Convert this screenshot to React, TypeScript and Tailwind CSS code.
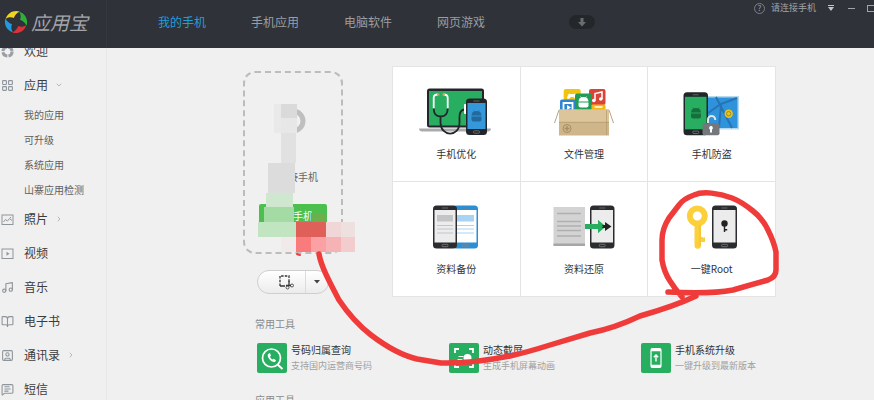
import { ReactNode } from "react"
import { BookOpen, ChevronDown, ChevronRight, Image, LayoutGrid, MessageSquareText, Music, SquarePlay, SquareUser } from "lucide-react"

interface MenuItem {
  name: string
  icon: ReactNode
  arrow?: "down" | "right"
  children?: string[]
}

interface Tile {
  name: string
  drawing: ReactNode
}

interface Tool {
  name: string
  info: string
  drawing: ReactNode
}

const iconProps = { size: 13, strokeWidth: 2, color: "#8f959c" }

const menu: MenuItem[] = [
  { name: "欢迎", icon: <WelcomeIcon /> },
  { name: "应用", icon: <LayoutGrid {...iconProps} />, arrow: "down", children: ["我的应用", "可升级", "系统应用", "山寨应用检测"] },
  { name: "照片", icon: <PhotoIcon />, arrow: "right" },
  { name: "视频", icon: <VideoIcon /> },
  { name: "音乐", icon: <Music {...iconProps} /> },
  { name: "电子书", icon: <BookOpen {...iconProps} /> },
  { name: "通讯录", icon: <SquareUser {...iconProps} />, arrow: "right" },
  { name: "短信", icon: <MessageSquareText {...iconProps} /> },
]

function WelcomeIcon() {
  return (
    <svg width="13" height="13" viewBox="0 0 13 13" fill="none">
      <circle cx="6.5" cy="6.5" r="4.6" stroke="#9a9fa5" strokeWidth="3" strokeDasharray="6 1.2" />
    </svg>
  )
}

function PhotoIcon() {
  return (
    <svg width="13" height="13" viewBox="0 0 13 13" fill="none" stroke="#8f959c">
      <rect x="1" y="2" width="11" height="9.5" />
      <path d="M2.500 9l2-2.500 2 1.500 2-2.500 2.500 2M9 4.500h1" />
    </svg>
  )
}

function VideoIcon() {
  return (
    <svg width="13" height="13" viewBox="0 0 13 13" fill="none" stroke="#8f959c">
      <rect x="1" y="2" width="11" height="9.5" />
      <path d="M5.500 4.800l3 2-3 2z" fill="#8f959c" stroke="none" />
    </svg>
  )
}

const petals = [
  { color: "#f0d41d", turn: 0 },
  { color: "#2fae3c", turn: 90 },
  { color: "#dd3038", turn: 180 },
  { color: "#2599dd", turn: 270 },
]

const Logo = () => (
  <svg width="24" height="24" viewBox="0 0 24 24">
    {petals.map(({ color, turn }) => (
      <path key={color} transform={`rotate(${turn} 12 12)`} d="M2 8C4 2.500 10-.5 15.800 1.500C12.500 3 11 5 9.800 8C7.500 7 4.500 7 2 8.800z" fill={color} />
    ))}
  </svg>
)

const Robot = ({ x, y, color }: { x: number, y: number, color: string }) => (
  <g transform={`translate(${x} ${y})`} fill={color} stroke={color}>
    <path d="M0 5a5 4.500 0 0 1 10 0z" stroke="none" />
    <path d="M0 6h10v3a2 2 0 0 1-2 2H2a2 2 0 0 1-2-2z" stroke="none" />
    <path d="M2 0l1.200 1.600M8 0L6.800 1.600" strokeWidth=".8" />
  </g>
)

const Phone = ({ x, y, w, h, body, screen }: { x: number, y: number, w: number, h: number, body: string, screen: string }) => (
  <g>
    <rect x={x} y={y} width={w} height={h} rx="3.500" fill={body} />
    <rect x={x + 1.5} y={y + 4.5} width={w - 3} height={h - 10.5} fill={screen} />
    <path d={`M${x + w / 2 - 3} ${y + 2.5}h6`} stroke="#777" strokeWidth=".8" />
    <rect x={x + w / 2 - 3} y={y + h - 4.2} width="6" height="2.400" rx="1" fill="none" stroke="#888" strokeWidth=".7" />
  </g>
)

const tiles: Tile[] = [
  {
    name: "手机优化",
    drawing: (
      <>
        <path d="M3 40.500h72c0 2-1.500 3-3 3H6c-1.500 0-3-1-3-3z" fill="#a9abad" />
        <rect x="11" y=".5" width="57" height="39" rx="2.500" fill="#22262a" />
        <rect x="13" y="3" width="53" height="34.500" fill="#27ae60" />
        <path d="M22 6.500c-3 0-4.300 1-4.300 3v11M27.500 6.500c3 0 4.200 1 4.200 3v11" fill="none" stroke="#fff" strokeWidth="1.800" />
        <path d="M21 6.500h2.500M26.500 6.500h2.500" stroke="#cda36a" strokeWidth="1.800" />
        <path d="M17.700 20.500c0 5 2.500 8 7 8s7-3 7-8M24.500 28.500v6c0 14.500 19 15 19 0v-6c0-4 1.500-6.500 5-7" fill="none" stroke="#22262a" strokeWidth="1.800" />
        <rect x="48" y="16" width="4" height="10" rx="1" fill="#fff" />
        <Phone x={50} y={10.5} w={21} h={36.5} body="#22262a" screen="#3498db" />
        <Robot x={55.5} y={22.5} color="#23699c" />
      </>
    ),
  },
  {
    name: "文件管理",
    drawing: (
      <>
        <rect x="19.700" y="1" width="17" height="17" rx="2" fill="#f1c40f" />
        <path d="M23 10c1-4 2-5 3-4h4c2-1 3 1 3.500 4-1.500 2-3 0-4-1h-2.500c-1 1-3 3-4 1z" fill="#fff" />
        <rect x="16" y="11.500" width="16" height="12" rx="2" fill="#2e86d1" />
        <path d="M19.500 22v-7h9v7" fill="none" stroke="#fff" strokeWidth="1.800" />
        <path d="M23 17l4 2.500-4 2.500z" fill="#fff" />
        <rect x="45" y="1" width="16.500" height="16" rx="2" fill="#d94438" />
        <rect x="47" y="16.500" width="14.500" height="8" rx="1.500" fill="#f5b70f" />
        <path d="M50.500 19h8" stroke="#fff" strokeWidth="1.500" />
        <path d="M51 12.500V5.500l7-1.500v7" fill="none" stroke="#fff" strokeWidth="1.500" />
        <circle cx="49.800" cy="12.500" r="1.800" fill="#fff" />
        <circle cx="56.800" cy="11" r="1.800" fill="#fff" />
        <rect x="31" y="5.500" width="16.500" height="17" rx="2" fill="#1f9d57" />
        <Robot x={34.5} y={8.5} color="#fff" />
        <path d="M15 22l-4.500 13M65 22l4.500 13" stroke="#a88b62" strokeWidth=".8" />
        <rect x="15" y="21.500" width="50" height="26" fill="#cfb58a" />
        <rect x="15" y="21.500" width="50" height="12.500" fill="#dcc49b" />
        <path d="M15 34.300h50M62.500 22v25" stroke="#b39869" strokeWidth=".7" />
        <circle cx="23" cy="40.500" r="4" fill="none" stroke="#a78d63" />
        <path d="M20.500 40.500h5M23 38v5" stroke="#a78d63" strokeWidth="1.400" />
      </>
    ),
  },
  {
    name: "手机防盗",
    drawing: (
      <>
        <rect x="34" y="8" width="33" height="33.500" fill="#b9d9ef" />
        <rect x="34" y="9.500" width="31.500" height="30.500" fill="#2f93db" />
        <path d="M36 25l13-9 16-6M44 9l16 31M49 17l-2 23" fill="none" stroke="#2674b6" strokeWidth="2" />
        <circle cx="56.700" cy="25.700" r="4.200" fill="#e6c51c" />
        <circle cx="56.700" cy="25.700" r="2.200" fill="none" stroke="#a08b28" />
        <Phone x={11.5} y={4.3} w={24.5} h={43} body="#22262a" screen="#27ae60" />
        <Robot x={19} y={19.5} color="#176f3c" />
        <path d="M36 35v-3.500a3.600 3.600 0 0 1 7.200 0V32" fill="none" stroke="#dfe6ea" strokeWidth="2" />
        <rect x="30.500" y="35.300" width="17" height="12" rx="2" fill="#74777b" />
        <path d="M39 38a1.900 1.900 0 0 1 1 3.500v3h-2v-3a1.900 1.900 0 0 1 1-3.500z" fill="#fff" />
      </>
    ),
  },
  {
    name: "资料备份",
    drawing: (
      <>
        <Phone x={37} y={2.5} w={25} h={43} body="#2b8fd6" screen="#fff" />
        <rect x="40" y="12" width="18" height="6.500" fill="#a9d3f2" />
        <path d="M41 22.500h17M41 26h17M41 30h17" stroke="#a9d3f2" />
        <Phone x={17} y={2.5} w={24} h={43} body="#2a2c2f" screen="#ececec" />
        <rect x="21" y="12" width="16" height="6.500" fill="#c3c4c6" />
        <path d="M21 22.500h16M21 26h16M21 30h16" stroke="#c3c4c6" />
      </>
    ),
  },
  {
    name: "资料还原",
    drawing: (
      <>
        <rect x="9.500" y="4" width="31.500" height="39" fill="#d3d3d3" />
        <rect x="9.500" y="40.500" width="31.500" height="2.500" fill="#a6a6a6" />
        <path d="M13 10.500h24M13 18.500h24M13 23h24M13 27.500h24M13 33h24" stroke="#b0b0b0" strokeWidth="1.400" />
        <Phone x={46} y={2.5} w={24.5} h={43} body="#2a2c2f" screen="#ececec" />
        <path d="M41 21h13v-4l8 6.500-8 6.500v-4H41z" fill="#27ae60" />
        <path d="M55 22h6v-3l6.500 4.500-6.500 4.500v-3h-6z" fill="#222" />
        <path d="M41 21h13v-4l5 6.500-5 6.500v-4H41z" fill="#27ae60" />
      </>
    ),
  },
  {
    name: "一键Root",
    drawing: (
      <>
        <circle cx="25.300" cy="13" r="7.500" fill="none" stroke="#fbd03a" strokeWidth="6" />
        <path d="M22.500 22h6.500v12h1.500l1 .8 1.500-.8v5h-4v3.500a3.200 3.200 0 0 1-6.500 0z" fill="#fbd03a" />
        <path d="M28 22v21" stroke="#eec033" />
        <Phone x={40} y={2.5} w={25} h={43} body="#2a2c2f" screen="#ececec" />
        <circle cx="52.500" cy="20.500" r="3.200" fill="#222" />
        <path d="M52.500 22v7M53 26.800h2.200" stroke="#222" strokeWidth="1.400" />
      </>
    ),
  },
]

const tools: Tool[] = [
  {
    name: "号码归属查询",
    info: "支持国内运营商号码",
    drawing: (
      <>
        <circle cx="14.500" cy="15" r="9" strokeWidth="1.700" />
        <path d="M20.500 21.500l5 4.500" strokeWidth="2" />
        <path d="M11 11c-1.500 3 3 8.500 7 8l1-1.800-2.300-1.500-1.200.8c-1.300-.6-2.200-1.700-2.500-2.800l1-1-1-2.600z" fill="#fff" stroke="none" />
      </>
    ),
  },
  {
    name: "动态截屏",
    info: "生成手机屏幕动画",
    drawing: (
      <>
        <path d="M6 10V6h4M20 6h4v4M24 20v4h-4M10 24H6v-4" strokeWidth="1.800" />
        <path d="M9.500 13.500h5M8.500 16.500h5" />
        <circle cx="18.500" cy="15" r="4" fill="#fff" stroke="none" />
      </>
    ),
  },
  {
    name: "手机系统升级",
    info: "一键升级到最新版本",
    drawing: (
      <>
        <rect x="10" y="5.500" width="10" height="19" rx="1.500" strokeWidth="1.200" />
        <path d="M10 7h10M10 23h10" strokeWidth="2.500" />
        <path d="M15 18.500V12M12.800 14.200L15 12l2.200 2.200" strokeWidth="1.400" />
      </>
    ),
  },
]

const Header = () => (
  <header className="relative z-10 flex h-12 shrink-0 bg-[#2f3239]">
    <div className="flex w-[107px] shrink-0 items-center gap-[3px] border-r border-[#35383f] pl-1 pb-1">
      <Logo />
      <span className="text-[19px] leading-6 whitespace-nowrap text-[#a3a5a9] italic">应用宝</span>
    </div>
    <nav className="flex items-center gap-[45px] pb-1 pl-[51px] text-xs whitespace-nowrap text-[#9a9da2]">
      <a href="#phone" className="text-[#1f9fdd]">我的手机</a>
      <a href="#apps">手机应用</a>
      <a href="#pc">电脑软件</a>
      <a href="#games">网页游戏</a>
    </nav>
    <button aria-label="下载" className="mt-[15px] ml-[84px] flex h-[14px] w-[26px] items-center justify-center rounded-full bg-[#24272a]">
      <svg width="8" height="9" viewBox="0 0 8 9"><path d="M2.500 0h3v4H8L4 8.500 0 4h2.500z" fill="#6a6d70" /></svg>
    </button>
    <div className="ml-auto flex h-4 items-center text-[9px] whitespace-nowrap text-[#a0a3a8]">
      <button aria-label="帮助" className="mr-1.5 flex size-[11px] items-center justify-center rounded-full border border-[#7c7f84] text-[8px] leading-none">?</button>
      <span>请连接手机</span>
      <button aria-label="菜单" className="ml-3">
        <svg width="6" height="6" viewBox="0 0 6 6"><path d="M0 0h6v1H0zM0 2h6L3 6z" fill="#c3c5c8" /></svg>
      </button>
      <button aria-label="最小化" className="ml-3.5 h-px w-[7px] bg-[#a0a3a8]"></button>
      <button aria-label="最大化" className="ml-3 h-[7px] w-[7px] border border-r-0 border-[#a0a3a8]"></button>
    </div>
  </header>
)

const Sidebar = () => (
  <aside className="w-[107px] shrink-0 border-r border-[#e8e8e8] bg-[#f0f0f0]">
    <ul className="-mt-3.5 whitespace-nowrap">
      {menu.map(item => (
        <li key={item.name}>
          <a href={`#${item.name}`} className="flex h-[34px] items-center text-xs text-[#3c3c3c]">
            <span className="w-6 pl-px">{item.icon}</span>
            {item.name}
            {item.arrow === "down" && <ChevronDown size={8} color="#9a9a9a" className="ml-[7px]" />}
            {item.arrow === "right" && <ChevronRight size={8} color="#9a9a9a" className="ml-[7px]" />}
          </a>
          {item.children && (
            <ul>
              {item.children.map(child => (
                <li key={child}>
                  <a href={`#${child}`} className="flex h-[25px] items-center pb-px pl-6 text-[10px] text-[#5f5f5f]">{child}</a>
                </li>
              ))}
            </ul>
          )}
        </li>
      ))}
    </ul>
  </aside>
)

const PhonePanel = () => (
  <div className="w-[100px] shrink-0 pt-[5px]">
    <div className="flex h-[183px] flex-col items-center rounded-xl border-2 border-dashed border-[#bcbcbc] pt-[34px]">
      <svg width="28" height="28" viewBox="0 0 28 28"><circle cx="14" cy="14" r="10" fill="none" stroke="#bfbfbf" strokeWidth="5" /></svg>
      <div className="mt-[34px] text-[10px] leading-4 text-[#666]">未连接手机</div>
      <button className="mt-[19px] h-6 w-[68px] rounded-xs bg-[#4cc04f] text-[10px] leading-5 text-white">连接手机</button>
    </div>
    <div className="mx-auto mt-4 flex h-6 w-[72px] rounded-full border border-[#cfcfcf] bg-linear-to-b from-white to-[#ececec]">
      <button aria-label="截屏" className="flex flex-1 items-center justify-center pl-2">
        <svg width="16" height="16" viewBox="0 0 16 16" fill="none" stroke="#333">
          <path d="M2 12V2h9v7" strokeWidth="1.300" strokeDasharray="2.500 1.200" />
          <path d="M2 12h5M8 11.500h5M11 7v5" strokeWidth="1.300" />
          <circle cx="9.500" cy="13.500" r="1.500" strokeWidth=".8" />
          <circle cx="14" cy="11.500" r="1.500" strokeWidth=".8" />
        </svg>
      </button>
      <button aria-label="更多" className="flex w-[23px] items-center justify-center border-l border-[#dcdcdc]">
        <svg width="6" height="4" viewBox="0 0 6 4"><path d="M0 0h6L3 3.500z" fill="#444" /></svg>
      </button>
    </div>
  </div>
)

const TileGrid = () => (
  <div className="grid flex-1 grid-cols-3 gap-px bg-[#e4e4e4] p-px">
    {tiles.map(tile => (
      <button key={tile.name} className="flex h-[114px] flex-col items-center bg-white pt-[21px]">
        <svg width="80" height="48" viewBox="0 0 80 48">{tile.drawing}</svg>
        <span className="mt-2.5 text-[10px] leading-4 text-[#333]">{tile.name}</span>
      </button>
    ))}
  </div>
)

const ToolCard = ({ tool }: { tool: Tool }) => (
  <a href={`#${tool.name}`} className="flex items-center gap-1 whitespace-nowrap">
    <svg width="30" height="30" viewBox="0 0 30 30" fill="none" stroke="#fff" className="rounded-xs bg-[#27ae60]">{tool.drawing}</svg>
    <span>
      <span className="block text-[10px] leading-4 text-[#333]">{tool.name}</span>
      <span className="block text-[9px] leading-4 text-[#a0a0a0]">{tool.info}</span>
    </span>
  </a>
)

const mosaic: [number, number, number, number, string][] = [
  [274, 104, 7, 29, "#e9e9e9"],
  [281, 104, 16, 14, "#dadada"],
  [281, 118, 16, 15, "#e7e7e7"],
  [281, 133, 15, 30, "#e1e1e1"],
  [268, 163, 27, 30, "#dcdcdc"],
  [266, 193, 27, 14, "#cfe6cf"],
  [264, 207, 30, 15, "#a4dba5"],
  [258, 222, 38, 15, "#c0e5c0"],
  [281, 237, 15, 15, "#f0eaea"],
  [311, 213, 15, 9, "#6cb04c"],
  [296, 222, 30, 15, "#de6058"],
  [296, 237, 15, 15, "#fa7b7b"],
  [311, 237, 15, 15, "#fba0a3"],
  [326, 237, 15, 15, "#f5b3b5"],
  [341, 237, 14, 15, "#f3cdce"],
  [326, 222, 15, 15, "#f0d6d6"],
  [341, 222, 14, 15, "#efe0e0"],
]

// blurred blocks over the phone name and the red pen marks
const Markup = () => (
  <svg aria-hidden="true" width="874" height="400" viewBox="0 0 874 400" className="pointer-events-none absolute top-0 left-0 z-20">
    {mosaic.map(([x, y, w, h, color]) => <rect key={`${x}:${y}`} x={x} y={y} width={w} height={h} fill={color} />)}
    <g fill="none" stroke="#ef3b3a" strokeWidth="5.500" strokeLinecap="round" strokeLinejoin="round">
      <path d="M297 254q2 1 3 1" strokeWidth="2" />
      <path d="M319 254C321 266 329 281 339 300Q353 321 371 335Q396 354 417 359L441 363Q470 364 510 356Q528 352 550 345L590 333Q615 328 640 316Q675 306 696 296" />
      <path d="M668 292C686 293 712 294 733 290Q750 285 768 280Q776 277 776 270V252Q774 242 768 230Q763 219 753 211Q742 202 732 198C719 193 703 191 694 195Q683 199 679 205L669 218Q662 229 662 240V260Q664 272 670 281Q675 289 682 297" />
    </g>
  </svg>
)

export default () => (
  <div className="relative flex h-screen flex-col overflow-hidden bg-[#f0f0f0] font-['Noto_Sans_CJK_SC',sans-serif]">
    <Header />
    <div className="flex min-h-0 flex-1">
      <Sidebar />
      <main className="flex-1 pt-[18px] pl-34">
        <div className="flex gap-[49px] pr-[98px]">
          <PhonePanel />
          <TileGrid />
        </div>
        <section className="mt-[19px] pl-3">
          <h2 className="text-[10px] leading-4 text-[#8a8a8a]">常用工具</h2>
          <div className="mt-2.5 grid grid-cols-3 pr-[41px] pl-0.5">
            {tools.map(tool => <ToolCard key={tool.name} tool={tool} />)}
          </div>
        </section>
        <section className="mt-[18px] pl-3">
          <h2 className="text-[10px] leading-4 text-[#8a8a8a]">应用工具</h2>
        </section>
      </main>
    </div>
    <Markup />
  </div>
)
